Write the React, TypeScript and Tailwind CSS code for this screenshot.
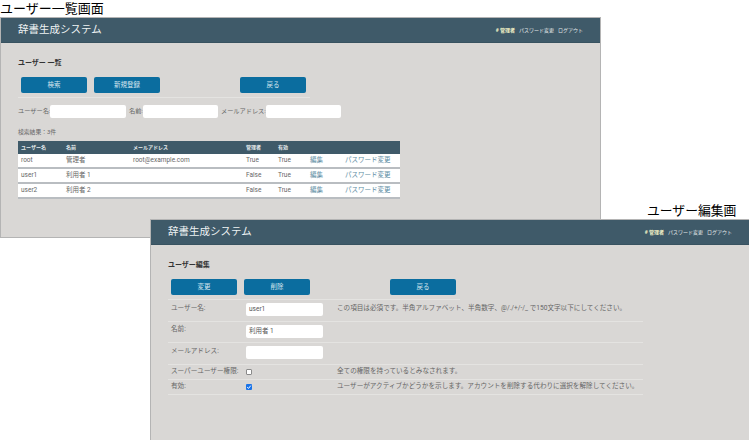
const FONT = "font-['Roboto','Noto_Sans_CJK_JP',sans-serif]"

function Header() {
  return (
    <div className="flex h-[25px] items-center justify-between border-b border-[#385260] bg-[#3f5a69] pl-[17px] pr-[17px]">
      <span className="text-[10.5px] leading-none text-[#eef2f3]">辞書生成システム</span>
      <div className="flex gap-[4px] text-[5px] leading-none text-[#e4e9ea]">
        <span className="font-bold text-[#f3f3c8]"># 管理者</span>
        <span>パスワード変更</span>
        <span>ログアウト</span>
      </div>
    </div>
  )
}

function Btn({ label, className = '' }: { label: string; className?: string }) {
  return (
    <button className={`flex h-[16px] w-[66px] items-center justify-center rounded-[2px] bg-[#0b6d9f] text-[6.5px] leading-none text-[#d5e6ee] ${className}`}>
      {label}
    </button>
  )
}

function ButtonRow({ labels }: { labels: string[] }) {
  return (
    <div className="flex pl-[3px]">
      <Btn label={labels[0]} />
      <Btn label={labels[1]} className="ml-[7px]" />
      <Btn label="戻る" className="ml-[80px]" />
    </div>
  )
}

function SearchField({ label, labelWidth, width }: { label: string; labelWidth: string; width: string }) {
  return (
    <div className="flex items-center">
      <span className={`whitespace-nowrap text-[6.2px] leading-none text-[#666] ${labelWidth}`}>{label}</span>
      <input className={`h-[13px] rounded-[2px] bg-white ${width}`} />
    </div>
  )
}

const users = [
  ['root', '管理者', 'root@example.com', 'True', 'True'],
  ['user1', '利用者 1', '', 'False', 'True'],
  ['user2', '利用者 2', '', 'False', 'True'],
]

const th = 'pl-[3px] text-left font-bold text-[5px] leading-none text-[#e6ebed]'
const td = 'pl-[3px] text-[6.5px] leading-none text-[#666] border-b-2 border-[#b9bdc1]'
const link = 'pl-[3px] text-[6.5px] leading-none text-[#5d8ca3] border-b-2 border-[#b9bdc1]'

function UserList() {
  return (
    <div className="absolute left-0 top-[17px] h-[221px] w-[601px] border border-[#b4b4b4] bg-[#d9d7d5]">
      <Header />
      <div className="pl-[17px] pt-[15px]">
        <h2 className="h-[10px] text-[7px] font-bold leading-[10px] text-[#333]">ユーザー 一覧</h2>
        <div className="mt-[9px]">
          <ButtonRow labels={['検索', '新規登録']} />
        </div>
        <div className="mt-[4px] h-px w-[292px] bg-[#e4e3e1]" />
        <div className="mt-[7px] flex gap-[3px]">
          <SearchField label="ユーザー名:" labelWidth="w-[32px]" width="w-[76px]" />
          <SearchField label="名前:" labelWidth="w-[14px]" width="w-[75px]" />
          <SearchField label="メールアドレス:" labelWidth="w-[45px]" width="w-[75px]" />
        </div>
        <p className="mt-[10px] text-[5.8px] leading-[8px] text-[#666]">検索結果：3件</p>
        <table className="mt-[5px] w-[382px] table-fixed border-separate border-spacing-0">
          <colgroup>
            <col className="w-[45px]" />
            <col className="w-[67px]" />
            <col className="w-[113px]" />
            <col className="w-[32px]" />
            <col className="w-[32px]" />
            <col className="w-[35px]" />
            <col />
          </colgroup>
          <thead>
            <tr className="h-[13px] bg-[#3f5a69]">
              <th className={th}>ユーザー名</th>
              <th className={th}>名前</th>
              <th className={th}>メールアドレス</th>
              <th className={th}>管理者</th>
              <th className={th}>有効</th>
              <th />
              <th />
            </tr>
          </thead>
          <tbody>
            {users.map((u) => (
              <tr key={u[0]} className="h-[15px] bg-white">
                {u.map((v, i) => (
                  <td key={i} className={td}>{v}</td>
                ))}
                <td className={link}>編集</td>
                <td className={link}>パスワード変更</td>
              </tr>
            ))}
          </tbody>
        </table>
      </div>
    </div>
  )
}

function FormRow({ label, help, tall, children }: { label: string; help?: string; tall: boolean; children: React.ReactNode }) {
  return (
    <div className={`flex w-[475px] border-b border-[#e4e3e1] ${tall ? 'h-[21.5px] pt-[3px]' : 'h-[15px] items-center'}`}>
      <span className={`w-[78px] shrink-0 whitespace-nowrap pl-[3px] text-[6.6px] leading-none text-[#666] ${tall ? 'pt-[1.5px]' : ''}`}>{label}</span>
      <div className="w-[91px] shrink-0">{children}</div>
      {help && <span className={`whitespace-nowrap text-[6.6px] leading-none text-[#666] ${tall ? 'pt-[1.5px]' : ''}`}>{help}</span>}
    </div>
  )
}

function TextBox({ value }: { value: string }) {
  return (
    <div className="flex h-[13px] w-[77px] items-center rounded-[2px] bg-white pl-[3px] text-[6.5px] leading-none text-[#555]">
      {value}
    </div>
  )
}

function CheckMark({ checked }: { checked: boolean }) {
  if (!checked) {
    return <div className="h-[6px] w-[6px] rounded-[1px] border border-[#8a8a8a] bg-white" />
  }
  return (
    <div className="h-[6px] w-[6px] rounded-[1px] bg-[#1a73e8]">
      <svg viewBox="0 0 6 6" className="block h-[6px] w-[6px]">
        <path d="M1.2 3.2 L2.5 4.4 L4.8 1.6" fill="none" stroke="white" strokeWidth="1" />
      </svg>
    </div>
  )
}

function UserEdit() {
  return (
    <div className="absolute left-[150px] top-[219px] h-[221px] w-[599px] border-l border-t border-[#b4b4b4] bg-[#d9d7d5]">
      <Header />
      <div className="pl-[17px] pt-[15px]">
        <h2 className="h-[10px] text-[7px] font-bold leading-[10px] text-[#333]">ユーザー編集</h2>
        <div className="mt-[9px]">
          <ButtonRow labels={['変更', '削除']} />
        </div>
        <div className="mt-[4px] h-px w-[292px] bg-[#e4e3e1]" />
        <FormRow tall label="ユーザー名:" help="この項目は必須です。半角アルファベット、半角数字、@/./+/-/_ で150文字以下にしてください。">
          <TextBox value="user1" />
        </FormRow>
        <FormRow tall label="名前:">
          <TextBox value="利用者 1" />
        </FormRow>
        <FormRow tall label="メールアドレス:">
          <TextBox value="" />
        </FormRow>
        <FormRow tall={false} label="スーパーユーザー権限:" help="全ての権限を持っているとみなされます。">
          <CheckMark checked={false} />
        </FormRow>
        <FormRow tall={false} label="有効:" help="ユーザーがアクティブかどうかを示します。アカウントを削除する代わりに選択を解除してください。">
          <CheckMark checked />
        </FormRow>
      </div>
    </div>
  )
}

export default function App() {
  return (
    <div className={`relative h-[440px] w-[749px] overflow-hidden bg-white ${FONT}`}>
      <span className="absolute left-0 top-0 text-[13px] leading-[17px] text-black">ユーザー一覧画面</span>
      <span className="absolute left-[647px] top-[202px] text-[12.8px] leading-[17px] text-black">ユーザー編集画面</span>
      <UserList />
      <UserEdit />
    </div>
  )
}
